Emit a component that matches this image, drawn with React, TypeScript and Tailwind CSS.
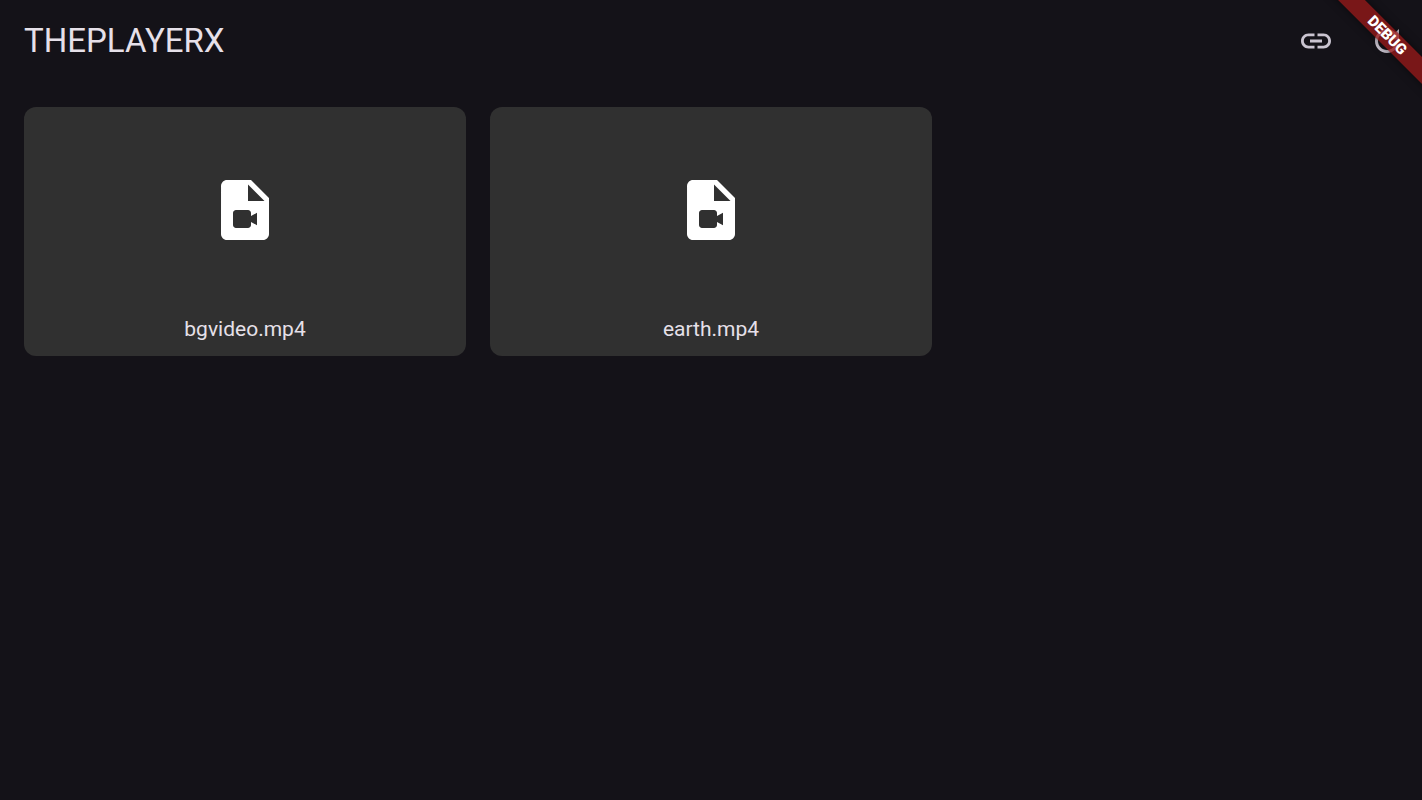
const videos = ["bgvideo.mp4", "earth.mp4"];

function LinkIcon() {
  return (
    <svg viewBox="0 0 24 24" className="size-9" fill="currentColor" aria-hidden="true">
      <path d="M3.9 12c0-1.71 1.39-3.1 3.1-3.1h4V7H7c-2.76 0-5 2.24-5 5s2.24 5 5 5h4v-1.9H7c-1.71 0-3.1-1.39-3.1-3.1zM8 13h8v-2H8v2zm9-6h-4v1.9h4c1.71 0 3.1 1.39 3.1 3.1s-1.39 3.1-3.1 3.1h-4V17h4c2.76 0 5-2.24 5-5s-2.24-5-5-5z" />
    </svg>
  );
}

function RefreshIcon() {
  return (
    <svg viewBox="0 0 24 24" className="size-9" fill="currentColor" aria-hidden="true">
      <path d="M17.65 6.35C16.2 4.9 14.21 4 12 4c-4.42 0-7.99 3.58-7.99 8s3.57 8 7.99 8c3.73 0 6.84-2.55 7.73-6h-2.08c-.82 2.33-3.04 4-5.65 4-3.31 0-6-2.69-6-6s2.69-6 6-6c1.66 0 3.14.69 4.22 1.78L13 11h7V4l-2.35 2.35z" />
    </svg>
  );
}

function VideoFileIcon() {
  return (
    <svg viewBox="0 0 24 24" className="size-[72px] text-white" fill="currentColor" aria-hidden="true">
      <path d="M14 2H6.01c-1.1 0-2 .89-2 2L4 20c0 1.1.89 2 1.99 2H18c1.1 0 2-.9 2-2V8l-6-6zm-1 7V3.5L18.5 9H13zm1 5 2-1.06v4.12L14 16v1c0 .55-.45 1-1 1H9c-.55 0-1-.45-1-1v-4c0-.55.45-1 1-1h4c.55 0 1 .45 1 1v1z" />
    </svg>
  );
}

function DebugBanner() {
  return (
    <div className="pointer-events-none absolute top-0 right-0 size-32 overflow-hidden">
      <div className="absolute top-[26px] -right-[45px] flex h-[19px] w-40 rotate-45 items-center justify-center bg-[#961818]/78 text-[15px] leading-none font-black text-white shadow-[0_0_9px_rgba(0,0,0,0.5)]">
        DEBUG
      </div>
    </div>
  );
}

export default function App() {
  return (
    <div className="relative min-h-screen bg-[#141218] font-['Roboto',sans-serif] text-[#e6e0e9]">
      <header className="flex h-[82px] items-center justify-between pl-6">
        <h1 className="text-[33px] leading-[42px]">THEPLAYERX</h1>
        <div className="flex text-[#cac4d0]">
          <button type="button" aria-label="Open link" className="flex h-[72px] w-[71px] items-center justify-center">
            <LinkIcon />
          </button>
          <button type="button" aria-label="Refresh" className="flex h-[72px] w-[71px] items-center justify-center">
            <RefreshIcon />
          </button>
        </div>
      </header>
      <main className="grid grid-cols-3 gap-6 px-6 py-[25px]">
        {videos.map((name) => (
          <button key={name} type="button" className="flex aspect-video flex-col rounded-xl bg-[#303030]">
            <span className="flex w-full flex-1 items-center justify-center">
              <VideoFileIcon />
            </span>
            <span className="w-full px-3 pb-3 text-center text-[21px] leading-[30px]">{name}</span>
          </button>
        ))}
      </main>
      <DebugBanner />
    </div>
  );
}
